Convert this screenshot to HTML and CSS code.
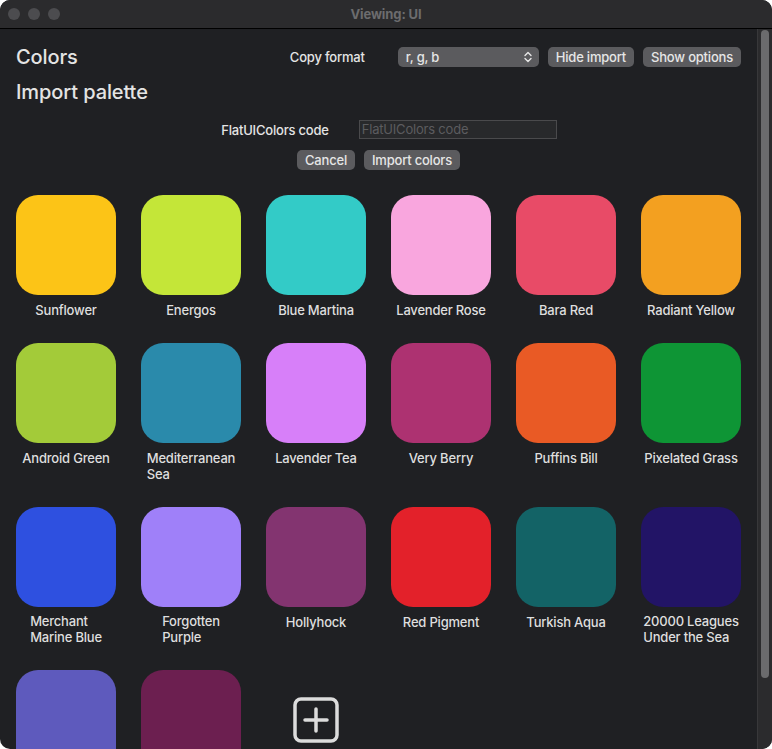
FILE: index.html
```
<!DOCTYPE html>
<html>
<head>
<meta charset="utf-8">
<link rel="stylesheet" href="styles.css">
</head>
<body>
<div class="window">
  <div class="titlebar">
    <div class="lights"><span class="light"></span><span class="light"></span><span class="light"></span></div>
    <div class="title">Viewing: UI</div>
  </div>
  <div class="body">
    <div class="content">
      <div class="toprow">
        <h1 class="h1">Colors</h1>
        <div class="controls">
          <span class="copy-label">Copy format</span>
          <div class="select"><span>r, g, b</span>
            <svg class="chev" width="8" height="12" viewBox="0 0 8 12"><path d="M1 4.5 L4 1.5 L7 4.5 M1 7.5 L4 10.5 L7 7.5" fill="none" stroke="#e6e6e6" stroke-width="1.4" stroke-linecap="round" stroke-linejoin="round"/></svg>
          </div>
          <button class="btn hide">Hide import</button>
          <button class="btn">Show options</button>
        </div>
      </div>
      <h2 class="h2">Import palette</h2>
      <div class="formrow">
        <span class="form-label">FlatUIColors code</span>
        <div class="input">FlatUIColors code</div>
      </div>
      <div class="btnrow">
        <button class="btn">Cancel</button>
        <button class="btn">Import colors</button>
      </div>
      <div class="grid">
        <div class="item"><div class="sw" style="background:#fcc417"></div><div class="lbl">Sunflower</div></div>
        <div class="item"><div class="sw" style="background:#c4e638"></div><div class="lbl">Energos</div></div>
        <div class="item"><div class="sw" style="background:#33cbc7"></div><div class="lbl">Blue Martina</div></div>
        <div class="item"><div class="sw" style="background:#f9a6de"></div><div class="lbl">Lavender Rose</div></div>
        <div class="item"><div class="sw" style="background:#e84b67"></div><div class="lbl">Bara Red</div></div>
        <div class="item"><div class="sw" style="background:#f3a020"></div><div class="lbl">Radiant Yellow</div></div>
        <div class="item"><div class="sw" style="background:#a3cb39"></div><div class="lbl">Android Green</div></div>
        <div class="item"><div class="sw" style="background:#2a8aab"></div><div class="lbl two">Mediterranean<br>Sea</div></div>
        <div class="item"><div class="sw" style="background:#d77ff9"></div><div class="lbl">Lavender Tea</div></div>
        <div class="item"><div class="sw" style="background:#ad3271"></div><div class="lbl">Very Berry</div></div>
        <div class="item"><div class="sw" style="background:#e95a25"></div><div class="lbl">Puffins Bill</div></div>
        <div class="item"><div class="sw" style="background:#0e9535"></div><div class="lbl">Pixelated Grass</div></div>
        <div class="item"><div class="sw" style="background:#2e50e0"></div><div class="lbl two">Merchant<br>Marine Blue</div></div>
        <div class="item"><div class="sw" style="background:#9f80f9"></div><div class="lbl two">Forgotten<br>Purple</div></div>
        <div class="item"><div class="sw" style="background:#833470"></div><div class="lbl">Hollyhock</div></div>
        <div class="item"><div class="sw" style="background:#e3212a"></div><div class="lbl">Red Pigment</div></div>
        <div class="item"><div class="sw" style="background:#136366"></div><div class="lbl">Turkish Aqua</div></div>
        <div class="item"><div class="sw" style="background:#221466"></div><div class="lbl two">20000 Leagues<br>Under the Sea</div></div>
        <div class="item"><div class="sw" style="background:#5e5abd"></div></div>
        <div class="item"><div class="sw" style="background:#6c1f50"></div></div>
        <div class="item add">
          <svg width="46" height="46" viewBox="0 0 46 46"><rect x="2" y="2" width="42" height="42" rx="6" fill="none" stroke="#dcdcdc" stroke-width="3.5"/><path d="M23 12 V34 M12 23 H34" stroke="#dcdcdc" stroke-width="3.5" stroke-linecap="round"/></svg>
        </div>
      </div>
    </div>
    <div class="scrolltrack"><div class="thumb"></div></div>
  </div>
</div>
</body>
</html>
```
FILE: styles.css
```
* { box-sizing: border-box; }
html, body { margin: 0; padding: 0; background: #ffffff; }
body { font-family: "Inter", "Noto Sans", sans-serif; color: #e4e4e4; }
.window {
  width: 772px; height: 749px; border-radius: 10px; overflow: hidden;
  background: #1f2023; display: flex; flex-direction: column;
}
.titlebar {
  height: 29px; flex: none; background: #2b2b2d; border-bottom: 1px solid #000;
  display: flex; align-items: center; justify-content: center; position: relative;
}
.lights { position: absolute; left: 8px; top: 8px; display: flex; gap: 8px; }
.light { width: 12px; height: 12px; border-radius: 50%; background: #4c4c4f; }
.title { font-size: 13px; font-weight: 700; color: #6c6c6e; letter-spacing: -0.1px; }
.body { flex: 1; display: flex; min-height: 0; }
.content { flex: 1; overflow: hidden; padding: 18px 16px 0 16px; }
.scrolltrack {
  width: 15px; flex: none; background: #2b2b2d; border-left: 1px solid #38383a;
  padding: 1px 3px 0 3px;
}
.thumb { width: 8px; height: 648px; border-radius: 4px; background: #6b6b6d; }
.toprow { display: flex; align-items: center; justify-content: space-between; height: 20px; }
.h1 { margin: 0; font-size: 20px; font-weight: 500; color: #e4e4e4; letter-spacing: -0.1px; }
.controls { display: flex; align-items: center; }
.copy-label { font-size: 13px; margin-right: 33px; font-weight: 500; letter-spacing: -0.2px; }
.btn, .select {
  font-family: inherit; font-size: 13px; font-weight: 500; color: #e6e6e6;
  background: #5b5b5e; border: none; border-radius: 5px; height: 20px; padding: 0 8px;
  letter-spacing: -0.2px; line-height: 20px;
}
.select { width: 141px; display: flex; align-items: center; justify-content: space-between; padding: 0 7px 0 8px; }
.chev { display: block; }
.hide { margin-left: 9px; margin-right: 9px; }
.h2 { margin: 13px 0 0 0; font-size: 20px; font-weight: 500; color: #e4e4e4; height: 24px; line-height: 24px; letter-spacing: -0.1px; }
.formrow { display: flex; align-items: center; justify-content: center; margin-top: 16px; padding-left: 21px; gap: 30px; }
.form-label { font-size: 13px; font-weight: 500; letter-spacing: -0.2px; }
.input {
  width: 198px; height: 19px; background: #28292b; border: 1px solid #4a4a4c;
  font-size: 13px; color: #5c5c5f; line-height: 17px; padding-left: 2px; letter-spacing: -0.2px;
}
.btnrow { display: flex; justify-content: center; gap: 9px; margin-top: 11px; }
.grid {
  margin-top: 25px; display: grid; grid-template-columns: repeat(6, 100px);
  column-gap: 25px; row-gap: 25px; align-items: start;
}
.item { display: flex; flex-direction: column; align-items: center; }
.sw { width: 100px; height: 100px; border-radius: 22px; }
.lbl {
  margin-top: 7px; font-size: 13px; line-height: 16px; width: max-content;
  text-align: left; color: #dedede; letter-spacing: -0.2px; font-weight: 500;
}
.lbl.two { margin-top: 6.5px; height: 32px; }
.add { height: 100px; justify-content: center; }
```
